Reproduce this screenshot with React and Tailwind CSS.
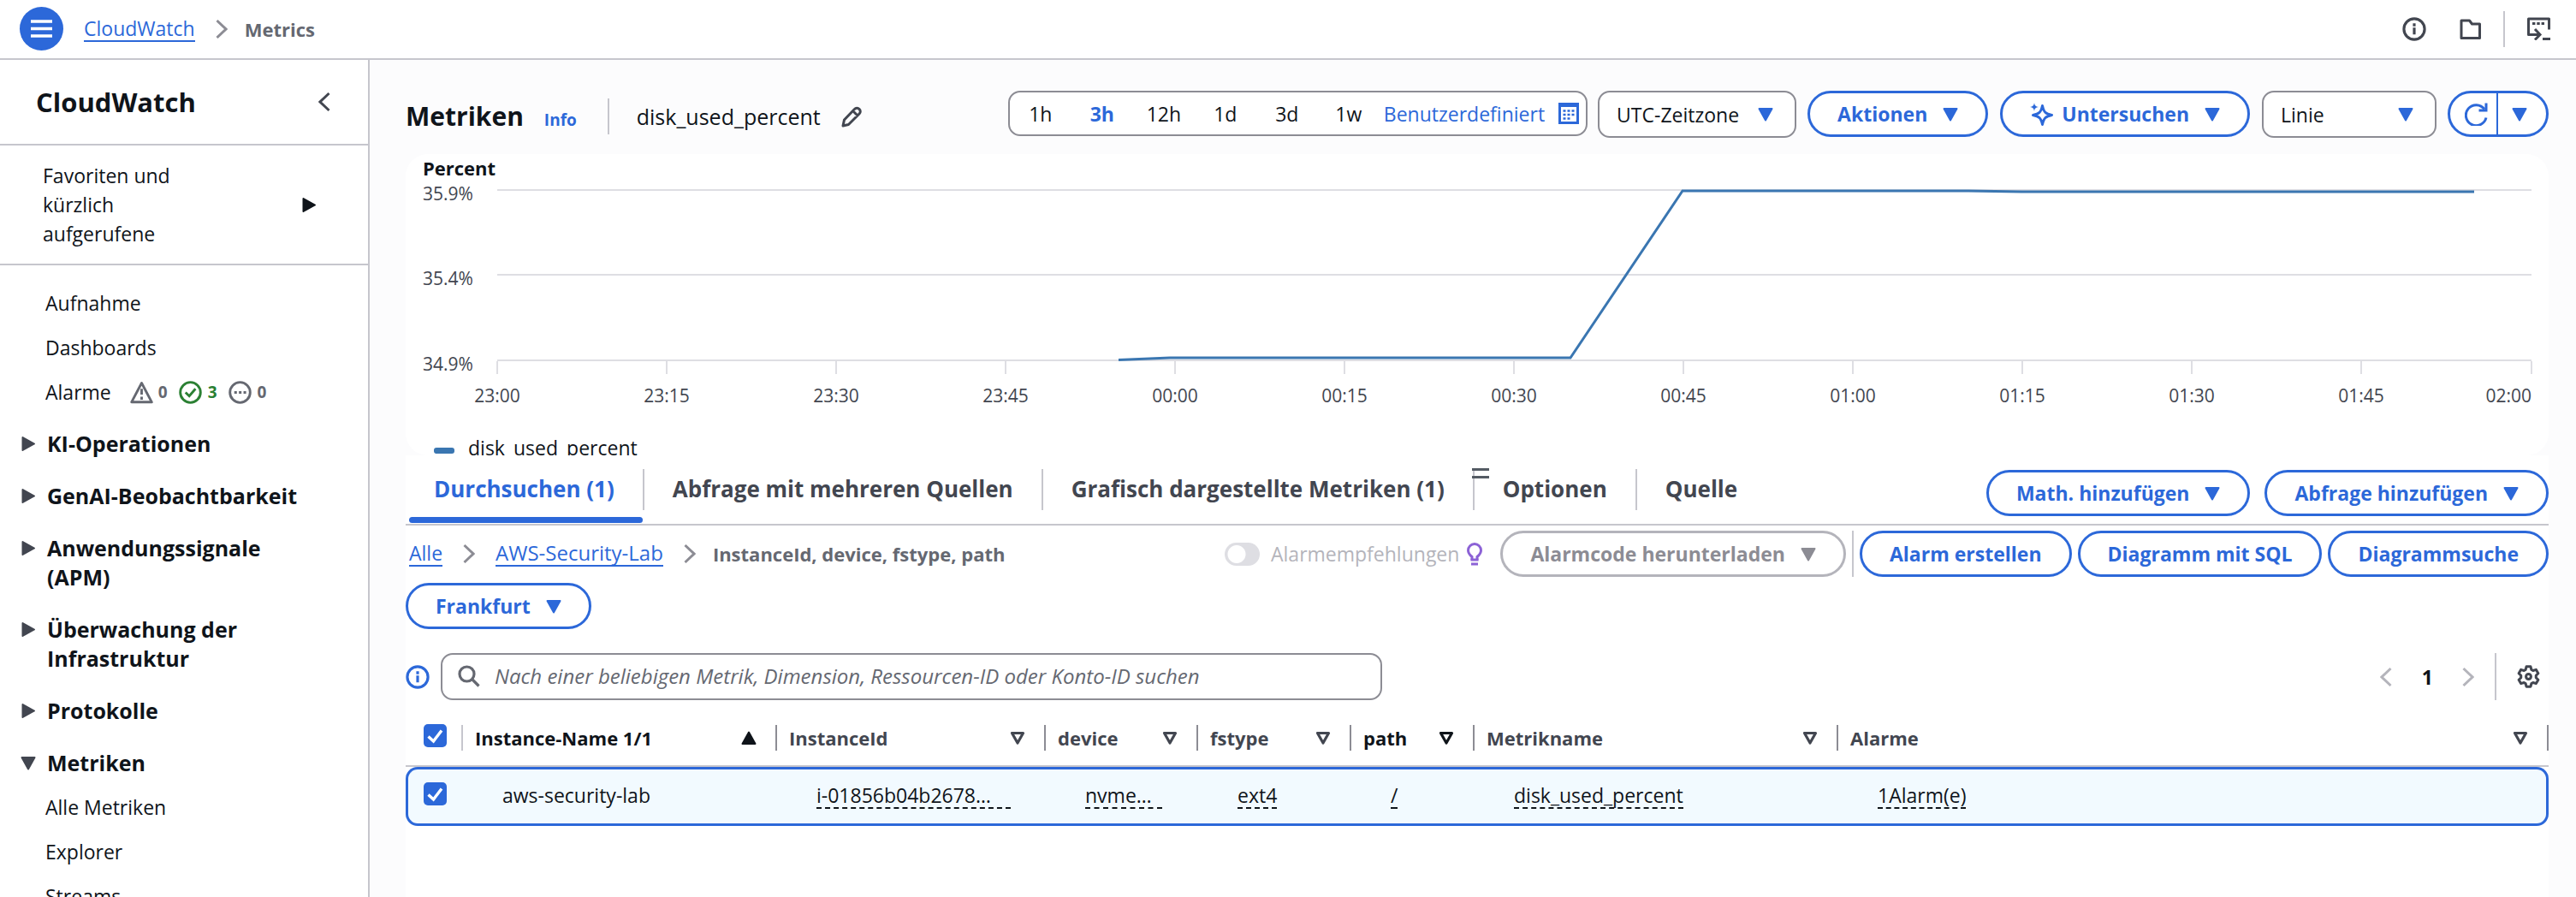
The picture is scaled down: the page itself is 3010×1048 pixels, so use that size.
import clsx from 'clsx'

const Caret = ({ className }) => (
  <svg viewBox="0 0 18 17" className={clsx('h-[17px] w-[18px] shrink-0', className)} fill="currentColor" stroke="currentColor" strokeWidth="2" strokeLinejoin="round">
    <path d="M1.5 2h15L9 15.5z" />
  </svg>
)

const CaretOutline = ({ className }) => (
  <svg viewBox="0 0 18 17" className={clsx('h-[17px] w-[18px] shrink-0', className)} fill="none" stroke="currentColor" strokeWidth="3.2" strokeLinejoin="round">
    <path d="M2.5 2.5h13L9 14z" />
  </svg>
)

const Chevron = ({ className }) => (
  <svg viewBox="0 0 14 24" className={clsx('h-6 w-[14px] shrink-0', className)} fill="none" stroke="currentColor" strokeWidth="3">
    <path d="M1.5 2 12 12 1.5 22" />
  </svg>
)

const InfoIcon = ({ className }) => (
  <svg viewBox="0 0 16 16" className={clsx('h-7 w-7 shrink-0', className)} fill="none" stroke="currentColor" strokeWidth="1.8">
    <circle cx="8" cy="8" r="6.9" />
    <path d="M8 7v4.6M8 4.2v1.9" />
  </svg>
)

const Button = ({ children, caret, disabled, className }) => (
  <button
    type="button"
    disabled={disabled}
    className={clsx(
      'flex h-[54px] shrink-0 items-center gap-[18px] rounded-full border-[3px] bg-white px-8 font-bold whitespace-nowrap',
      disabled ? 'border-[#b4b4bb] text-[#8c8c94]' : 'border-[#2c68d9] text-[#2c68d9]',
      className
    )}
  >
    {children}
    {caret && <Caret />}
  </button>
)

const Select = ({ label, value, className }) => (
  <div className={clsx('relative h-[55px] shrink-0', className)}>
    <select
      aria-label={label}
      className="h-full w-full appearance-none rounded-[14px] border-2 border-[#8c8c94] bg-white pl-5 text-[#0f141a]"
    >
      <option>{value}</option>
    </select>
    <Caret className="pointer-events-none absolute top-[19px] right-[27px] text-[#2c68d9]" />
  </div>
)

const Checkbox = ({ label }) => (
  <span className="relative block h-[27px] w-[27px]">
    <input type="checkbox" aria-label={label} defaultChecked className="block h-[27px] w-[27px] appearance-none rounded-[5px] bg-[#2c68d9]" />
    <svg viewBox="0 0 27 27" className="pointer-events-none absolute inset-0 h-[27px] w-[27px]" fill="none" stroke="#fff" strokeWidth="3.4">
      <path d="M5.5 14.5 11.5 20 21 7.5" />
    </svg>
  </span>
)

const Header = () => (
  <header className="flex h-[70px] shrink-0 items-center border-b-2 border-[#c6c6cd] bg-white pr-[30px] pb-px pl-[23px]">
    <button type="button" aria-label="Navigation" className="flex h-[51px] w-[51px] items-center justify-center rounded-full bg-[#2c68d9]">
      <svg viewBox="0 0 25 21" className="h-[21px] w-[25px]" stroke="#fff" strokeWidth="3.4">
        <path d="M0 2h25M0 10.5h25M0 19h25" />
      </svg>
    </button>
    <nav className="ml-6 flex items-center">
      <a href="#cloudwatch" className="border-b-2 border-[#2c68d9] text-[#2c68d9]">CloudWatch</a>
      <Chevron className="ml-6 text-[#8c8c94]" />
      <span className="ml-5 text-[22px] font-bold text-[#656871]">Metrics</span>
    </nav>
    <div className="ml-auto flex items-center text-[#424650]">
      <InfoIcon />
      <svg viewBox="0 0 25 24" className="ml-[39px] h-6 w-[25px]" fill="none" stroke="currentColor" strokeWidth="3">
        <path d="M2 22.5V2h9.5l3 4H23.5v16.5z" strokeLinejoin="round" />
      </svg>
      <div className="ml-[26px] h-[42px] w-[2px] bg-[#c6c6cd]" />
      <svg viewBox="0 0 27 27" className="ml-[26px] h-[27px] w-[27px]" fill="none" stroke="currentColor" strokeWidth="3">
        <path d="M25.5 14.5V2H1.5v18.5h13" strokeLinejoin="round" />
        <path d="M9 14l6 6.5-6 6M18 25.5h9" />
        <path d="M6 7.5h15" strokeDasharray="3.4 1.9" />
      </svg>
    </div>
  </header>
)

const sections = [
  { name: 'KI-Operationen' },
  { name: 'GenAI-Beobachtbarkeit' },
  { name: 'Anwendungssignale (APM)' },
  { name: 'Überwachung der Infrastruktur' },
  { name: 'Protokolle' },
  { name: 'Metriken', items: ['Alle Metriken', 'Explorer', 'Streams'] },
]

const AlarmCounts = () => (
  <span className="flex items-center text-[19px] font-bold text-[#656871]">
    <svg viewBox="0 0 16 16" className="h-[27px] w-[27px]" fill="none" stroke="currentColor" strokeWidth="1.7" strokeLinejoin="round">
      <path d="M8 1.5 15 14.7H1z" />
      <path d="M8 5.5v4M8 11v2" />
    </svg>
    <span className="ml-[6px]">0</span>
    <svg viewBox="0 0 16 16" className="ml-[13px] h-[27px] w-[27px] text-[#2b8033]" fill="none" stroke="currentColor" strokeWidth="1.7">
      <circle cx="8" cy="8" r="7" />
      <path d="m4.6 8 2.6 2.5L11.5 5.5" />
    </svg>
    <span className="ml-[7px] text-[#2b8033]">3</span>
    <svg viewBox="0 0 16 16" className="ml-[13px] h-[27px] w-[27px]" fill="none" stroke="currentColor" strokeWidth="1.7">
      <circle cx="8" cy="8" r="7" />
      <path d="M4 8h8.2" strokeDasharray="1.8 1.4" />
    </svg>
    <span className="ml-[7px]">0</span>
  </span>
)

const Sidebar = () => (
  <aside className="w-[432px] shrink-0 overflow-hidden border-r-2 border-[#c6c6cd] bg-white leading-[34px]">
    <div className="flex h-[100px] items-center justify-between border-b-2 border-[#c6c6cd] pr-11 pl-[42px]">
      <h2 className="text-[31px] font-bold">CloudWatch</h2>
      <button type="button" aria-label="Schließen">
        <Chevron className="rotate-180 text-[#424650]" />
      </button>
    </div>
    <div className="flex items-center justify-between border-b-2 border-[#c6c6cd] py-[18px] pr-[60px] pl-[50px]">
      <span className="w-40">Favoriten und kürzlich aufgerufene</span>
      <Caret className="-rotate-90" />
    </div>
    <nav className="pt-[27px]">
      <ul className="flex flex-col gap-[18px] pl-[53px]">
        <li><a href="#aufnahme">Aufnahme</a></li>
        <li><a href="#dashboards">Dashboards</a></li>
        <li className="flex gap-[22px]">
          <a href="#alarme">Alarme</a>
          <AlarmCounts />
        </li>
      </ul>
      <ul className="mt-[26px] flex flex-col gap-[27px]">
        {sections.map(({ name, items }) => (
          <li key={name}>
            <button type="button" className="flex w-full items-start gap-[13px] pr-[70px] pl-6 text-left text-[25px] font-bold">
              <Caret className={clsx('mt-[9px] text-[#424650]', !items && '-rotate-90')} />
              {name}
            </button>
            {items && (
              <ul className="mt-[18px] flex flex-col gap-[18px] pl-[53px]">
                {items.map((item) => (
                  <li key={item}><a href="#metriken">{item}</a></li>
                ))}
              </ul>
            )}
          </li>
        ))}
      </ul>
    </nav>
  </aside>
)

const ranges = ['1h', '3h', '12h', '1d', '3d', '1w']

const Toolbar = () => (
  <div className="flex h-[110px] items-start justify-between pt-9">
    <div className="mt-[9px] flex h-[42px] items-center">
      <h1 className="text-[30px] font-bold">Metriken</h1>
      <a href="#info" className="mt-2 ml-6 text-[19px] font-bold text-[#2c68d9]">Info</a>
      <div className="ml-9 h-[42px] w-[2px] bg-[#c6c6cd]" />
      <span className="ml-8 text-[25px]">disk_used_percent</span>
      <button type="button" aria-label="Umbenennen" className="ml-6">
        <svg viewBox="0 0 25 25" className="h-[25px] w-[25px] text-[#424650]" fill="none" stroke="currentColor" strokeWidth="3" strokeLinejoin="round">
          <path d="M2 23l1.5-7L15.5 3.5a3.6 3.6 0 0 1 5.5 0 3.6 3.6 0 0 1 0 5.5L8.5 21.5zM13.5 5.5l6 6" />
        </svg>
      </button>
    </div>
    <div className="flex items-start">
      <div className="flex h-[53px] items-center rounded-[14px] border-2 border-[#8c8c94] bg-white pr-2">
        {ranges.map((range) => (
          <button
            key={range}
            type="button"
            className={clsx('w-[72px] text-center', range === '3h' && 'font-bold text-[#2c68d9]')}
          >
            {range}
          </button>
        ))}
        <button type="button" className="ml-[5px] flex items-center gap-4 text-[#2c68d9]">
          Benutzerdefiniert
          <svg viewBox="0 0 24 25" className="h-[25px] w-6" fill="none" stroke="currentColor">
            <rect x="1.5" y="1.5" width="21" height="22" strokeWidth="3" />
            <path d="M1 3h22" strokeWidth="4" />
            <path d="M5.5 9.5h14M5.5 14h14M5.5 18.5h9" strokeWidth="2.6" strokeDasharray="3 2" />
          </svg>
        </button>
      </div>
      <Select label="Zeitzone" value="UTC-Zeitzone" className="ml-3 w-[232px]" />
      <Button caret className="ml-[13px]">Aktionen</Button>
      <Button caret className="ml-[14px]">
        <span className="flex items-center gap-[10px]">
          <svg viewBox="0 0 27 27" className="h-[27px] w-[27px]" fill="none" stroke="currentColor" strokeWidth="3" strokeLinejoin="round">
            <path d="M14.5 3.5c1.7 7.5 3.5 9.5 11 11-7.5 1.5-9.3 3.5-11 11-1.7-7.5-3.5-9.5-11-11 7.5-1.5 9.3-3.5 11-11z" />
            <path d="M5 0c.6 3.4 1.6 4.4 5 5-3.4.6-4.4 1.6-5 5-.6-3.4-1.6-4.4-5-5 3.4-.6 4.4-1.6 5-5z" fill="currentColor" stroke="none" />
          </svg>
          Untersuchen
        </span>
      </Button>
      <Select label="Diagrammtyp" value="Linie" className="ml-[14px] w-[204px]" />
      <div className="ml-[13px] flex h-[54px] w-[118px] rounded-full border-[3px] border-[#2c68d9] bg-white text-[#2c68d9]">
        <button type="button" aria-label="Aktualisieren" className="flex w-14 items-center justify-center border-r-2 border-[#2c68d9] pl-[6px]">
          <svg viewBox="0 0 27 27" className="h-[27px] w-[27px]" fill="none" stroke="currentColor" strokeWidth="3">
            <path d="M25 17.5A12 12 0 1 1 23 7.5" />
            <path d="M25 .5V9H16.5" />
          </svg>
        </button>
        <button type="button" aria-label="Intervall" className="flex flex-1 items-center justify-center pr-[6px]">
          <Caret />
        </button>
      </div>
    </div>
  </div>
)

const ticks = ['23:00', '23:15', '23:30', '23:45', '00:00', '00:15', '00:30', '00:45', '01:00', '01:15', '01:30', '01:45']
const gridLines = [
  { label: '35.9%', y: 42 },
  { label: '35.4%', y: 141 },
  { label: '34.9%', y: 241 },
]

const Chart = () => (
  <div className="overflow-hidden rounded-[26px] bg-white">
    <svg viewBox="0 0 2504 352" className="block w-full" fontSize="21" fill="#424650">
      <text x="20" y="25" fontSize="22" fontWeight="700" fill="#0f141a">Percent</text>
      {gridLines.map(({ label, y }) => (
        <g key={label}>
          <path d={`M107 ${y}H2484`} stroke="#dedee3" strokeWidth="2" />
          <text x="20" y={y + 12}>{label}</text>
        </g>
      ))}
      {ticks.map((tick, i) => (
        <g key={tick}>
          <path d={`M${107 + i * 198} 242v15`} stroke="#dedee3" strokeWidth="2" />
          <text x={107 + i * 198} y="290" textAnchor="middle">{tick}</text>
        </g>
      ))}
      <path d="M2484 242v15" stroke="#dedee3" strokeWidth="2" />
      <text x="2484" y="290" textAnchor="end">02:00</text>
      <path
        d="M833 240.5 893 238H1361L1492 43H1826L1888 44H2417"
        fill="none"
        stroke="#3a76b1"
        strokeWidth="3"
      />
      <rect x="33" y="343" width="24" height="7" rx="3" fill="#3a76b1" />
      <text x="73" y="352" fontSize="23" fill="#0f141a">disk_used_percent</text>
    </svg>
  </div>
)

const tabs = ['Durchsuchen (1)', 'Abfrage mit mehreren Quellen', 'Grafisch dargestellte Metriken (1)', 'Optionen', 'Quelle']

const Tabs = () => (
  <div className="relative flex h-[82px] items-start border-b-2 border-[#c6c6cd] pt-4">
    {tabs.map((tab, i) => (
      <button
        key={tab}
        type="button"
        className={clsx(
          'relative h-12 shrink-0 border-r-2 px-[33px] pb-[2px] text-[26px] font-bold',
          i === tabs.length - 1 ? 'border-transparent' : 'border-[#c6c6cd]',
          i === 0 ? 'text-[#2c68d9]' : 'text-[#424650]'
        )}
      >
        {tab}
        {i === 0 && <span className="absolute top-14 right-0 left-1 h-[7px] rounded-full bg-[#2c68d9]" />}
      </button>
    ))}
    <svg viewBox="0 0 20 12" className="absolute top-[15px] left-1/2 -ml-[6px] h-3 w-5" stroke="#545b64" strokeWidth="3">
      <path d="M0 1.5h20M0 10.5h20" />
    </svg>
    <div className="mt-px ml-auto flex gap-[17px]">
      <Button caret>Math. hinzufügen</Button>
      <Button caret>Abfrage hinzufügen</Button>
    </div>
  </div>
)

const ActionRow = () => (
  <div className="flex items-center pt-[6px]">
    <nav className="flex items-center pl-1">
      <a href="#alle" className="border-b-2 border-[#2c68d9] text-[#2c68d9]">Alle</a>
      <Chevron className="ml-6 text-[#8c8c94]" />
      <a href="#lab" className="ml-6 border-b-2 border-[#2c68d9] text-[24px] text-[#2c68d9]">AWS-Security-Lab</a>
      <Chevron className="ml-6 text-[#8c8c94]" />
      <span className="ml-5 text-[22px] font-bold text-[#656871]">InstanceId, device, fstype, path</span>
    </nav>
    <div className="ml-auto flex items-center">
      <label className="flex items-center text-[#b4b4bb]">
        <input
          type="checkbox"
          disabled
          className="mr-[13px] h-[27px] w-[41px] appearance-none rounded-full bg-[#dedee3] bg-[radial-gradient(circle_at_14px_center,#fff_10px,transparent_11px)]"
        />
        Alarmempfehlungen
      </label>
      <svg viewBox="0 0 18 27" className="ml-[9px] h-[27px] w-[18px]" fill="none" stroke="#8c62d6" strokeWidth="3">
        <path d="M6 20.5v-4C3.5 14.5 1.5 12.5 1.5 9a7.5 7.5 0 0 1 15 0c0 3.5-2 5.5-4.5 7.5v4" />
        <path d="M4.5 20h9M5 25h8" />
      </svg>
      <Button caret disabled className="ml-[21px]">Alarmcode herunterladen</Button>
      <div className="ml-[7px] h-[54px] w-[2px] bg-[#c6c6cd]" />
      <div className="ml-[7px] flex gap-[7px]">
        <Button>Alarm erstellen</Button>
        <Button>Diagramm mit SQL</Button>
        <Button>Diagrammsuche</Button>
      </div>
    </div>
  </div>
)

const SearchRow = () => (
  <div className="mt-7 flex items-center">
    <InfoIcon className="text-[#2c68d9]" />
    <div className="relative ml-[13px] h-[55px] w-[1100px]">
      <svg viewBox="0 0 26 26" className="absolute top-[14px] left-5 h-[26px] w-[26px] text-[#656871]" fill="none" stroke="currentColor" strokeWidth="3.2">
        <circle cx="10.5" cy="10.5" r="8.5" />
        <path d="m16.5 16.5 8 8" />
      </svg>
      <input
        type="text"
        aria-label="Suchen"
        placeholder="Nach einer beliebigen Metrik, Dimension, Ressourcen-ID oder Konto-ID suchen"
        className="h-full w-full rounded-[14px] border-2 border-[#8c8c94] bg-white pb-[2px] pl-[61px] text-[24px] placeholder:text-[#656871] placeholder:italic"
      />
    </div>
    <div className="ml-auto flex items-center">
      <button type="button" aria-label="Vorherige Seite"><Chevron className="rotate-180 text-[#b4b4bb]" /></button>
      <button type="button" className="mr-[34px] ml-[35px] font-bold">1</button>
      <button type="button" aria-label="Nächste Seite"><Chevron className="text-[#b4b4bb]" /></button>
      <div className="ml-6 h-[55px] w-[2px] bg-[#c6c6cd]" />
      <button type="button" aria-label="Einstellungen" className="mr-[10px] ml-6">
        <svg viewBox="0 0 24 24" className="h-[27px] w-[27px] text-[#424650]" fill="none" stroke="currentColor" strokeWidth="2.7" strokeLinejoin="round">
          <path d="M9.8 1.6h4.4l.8 3.2 1.7 1 3.2-1 2.2 3.8-2.3 2.3v2.2l2.3 2.3-2.2 3.8-3.2-1-1.7 1-.8 3.2H9.8L9 19.2l-1.7-1-3.2 1-2.2-3.8 2.3-2.3v-2.2L1.9 8.6l2.2-3.8 3.2 1 1.7-1z" />
          <circle cx="12" cy="12" r="2.6" />
        </svg>
      </button>
    </div>
  </div>
)

const columns = [
  { name: 'Instance-Name 1/1', value: 'aws-security-lab', width: 'w-[367px]', sorted: true },
  { name: 'InstanceId', value: 'i-01856b04b2678…', width: 'w-[314px]', valueWidth: 'min-w-[227px]' },
  { name: 'device', value: 'nvme…', width: 'w-[178px]', valueWidth: 'min-w-[90px]' },
  { name: 'fstype', value: 'ext4', width: 'w-[179px]' },
  { name: 'path', value: '/', width: 'w-[144px]', active: true },
  { name: 'Metrikname', value: 'disk_used_percent', width: 'w-[425px]' },
  { name: 'Alarme', value: '1Alarm(e)', width: '' },
]

const MetricsTable = () => (
  <table className="mt-3 w-full table-fixed border-separate border-spacing-0 text-left">
    <thead>
      <tr className="h-[66px]">
        <th className="w-[67px] border-b-2 border-[#c6c6cd]">
          <div className="flex h-[30px] items-center border-r-2 border-[#c6c6cd] pb-[6px] pl-[21px]">
            <Checkbox label="Alle auswählen" />
          </div>
        </th>
        {columns.map(({ name, width, sorted, active }) => (
          <th key={name} className={clsx('border-b-2 border-[#c6c6cd] text-[22px] font-bold', width)}>
            <div
              className={clsx(
                'flex h-[30px] items-center justify-between border-r-2 border-[#8c8c94] pr-[22px] pl-[14px]',
                sorted || active ? 'text-[#0f141a]' : 'text-[#424650]'
              )}
            >
              {name}
              {sorted ? <Caret className="rotate-180" /> : <CaretOutline />}
            </div>
          </th>
        ))}
      </tr>
    </thead>
    <tbody>
      <tr className="h-[69px]">
        <td className="rounded-l-[14px] border-y-[3px] border-l-[3px] border-[#2c68d9] bg-[#f2faff] pb-[6px] pl-[18px]">
          <Checkbox label="aws-security-lab auswählen" />
        </td>
        {columns.map(({ name, value, sorted, valueWidth }) => (
          <td
            key={name}
            className="border-y-[3px] border-[#2c68d9] bg-[#f2faff] pb-[2px] pl-[46px] whitespace-nowrap last:rounded-r-[14px] last:border-r-[3px]"
          >
            <span className={clsx('inline-block border-b-2 border-dashed', sorted ? 'border-transparent' : 'border-[#0f141a]', valueWidth)}>
              {value}
            </span>
          </td>
        ))}
      </tr>
    </tbody>
  </table>
)

const App = () => (
  <div className="flex h-screen flex-col overflow-hidden bg-[#fcfcfd] font-['Open_Sans','Noto_Sans',sans-serif] text-[23px] leading-[28px] text-[#0f141a]">
    <Header />
    <div className="flex min-h-0 flex-1">
      <Sidebar />
      <main className="flex min-w-0 flex-1 flex-col pr-8 pl-[42px]">
        <Toolbar />
        <Chart />
        <section className="flex-1 bg-white">
          <Tabs />
          <ActionRow />
          <Button caret className="mt-[7px]">Frankfurt</Button>
          <SearchRow />
          <MetricsTable />
        </section>
      </main>
    </div>
  </div>
)

export default App
